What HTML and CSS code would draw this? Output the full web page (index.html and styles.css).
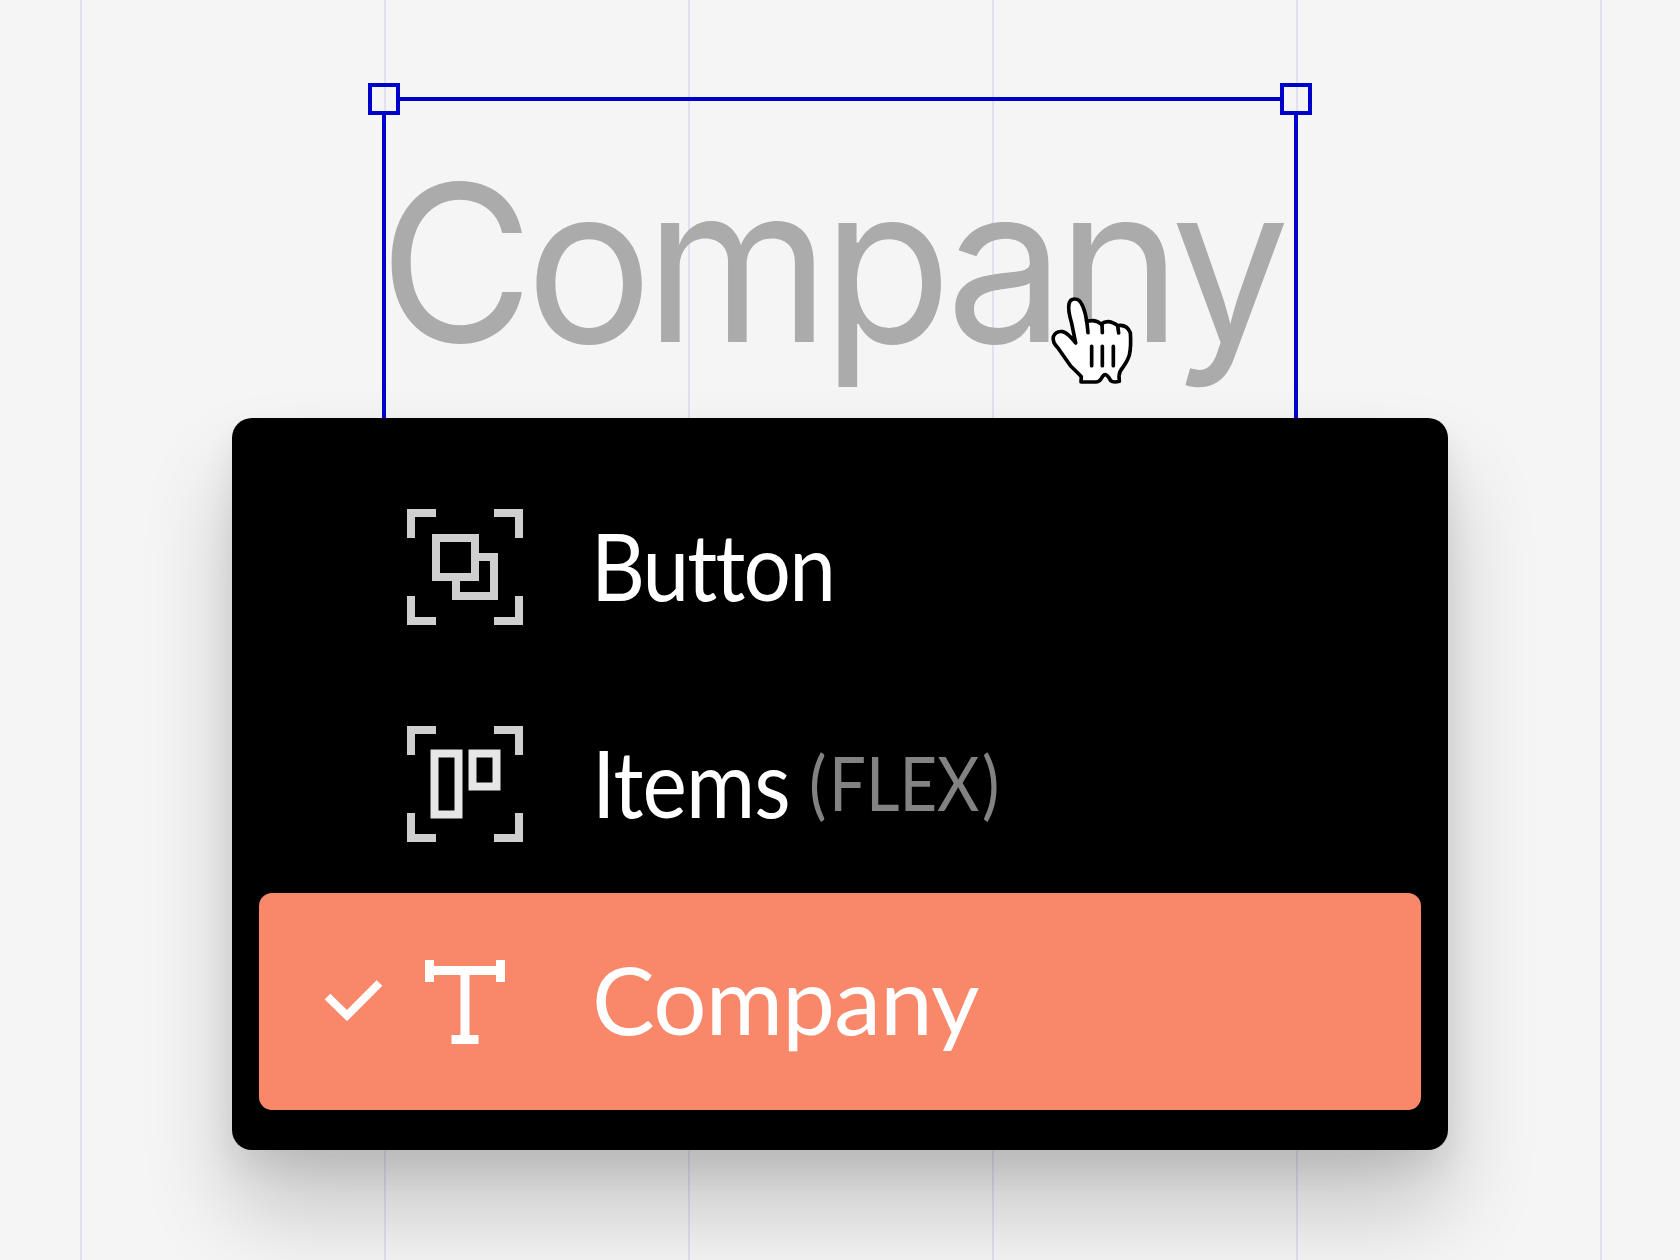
FILE: index.html
```html
<!DOCTYPE html>
<html lang="en">
    <head>
        <meta charset="utf-8">
        <title>Layers</title>
        <link rel="stylesheet" href="styles.css">
    </head>
    <body>
        <main class="canvas">
            <div class="selection">
                <span class="handle handle-left"></span>
                <span class="handle handle-right"></span>
                <div class="headline">Company</div>
            </div>
            <ul class="menu">
                <li class="row">
                    <span class="check"></span>
                    <svg class="icon" viewBox="0 0 116 116">
                        <path class="frame" d="M4 29V4H29M87 4H112V29M112 87V112H87M29 112H4V87"/>
                        <path class="group" d="M29 29H68V68H29ZM72 48H87V87H49V72"/>
                    </svg>
                    <span class="label label-button">Button</span>
                </li>
                <li class="row">
                    <span class="check"></span>
                    <svg class="icon" viewBox="0 0 116 116">
                        <path class="frame" d="M4 29V4H29M87 4H112V29M112 87V112H87M29 112H4V87"/>
                        <path class="flex" d="M27.5 27.5H51.5V88.5H27.5ZM65.5 27.5H89.5V60.5H65.5Z"/>
                    </svg>
                    <span class="label label-items">Items</span>
                    <span class="hint">(<span class="hint-text">FLEX</span>)</span>
                </li>
                <li class="row active">
                    <svg class="check" viewBox="0 0 60 44">
                        <path d="M2.5 19.5L22 38.5L54.5 6"/>
                    </svg>
                    <svg class="icon" viewBox="0 0 116 116">
                        <path class="type" d="M22.5 17V39M93.5 17V39M22.5 27.5H93.5M58 27.5V96.5M44.5 96.5H71.5"/>
                    </svg>
                    <span class="label label-company">Company</span>
                </li>
            </ul>
            <svg class="cursor" viewBox="0 0 360 360">
                <path class="hand" d="M137 189L125 130Q113 90 117 72Q120 57 134 57Q149 57 157 76Q166 95 170 125Q195 116 213 132Q236 115 263 137Q290 132 301 158Q304 200 298 225Q294 240 280 260Q268 273 267 288L268 304Q250 309 242 302Q232 284 226 284Q220 284 213 297Q206 307 196 306H153L154 290Q145 280 122 258L84 204Q66 186 70 170Q78 152 98 155Q113 158 137 189Z"/>
                <path class="crease" d="M170 120L174 158M216 132L217 158M263 137L266 159M185 199V257M217 199V257M250 199V257"/>
            </svg>
        </main>
    </body>
</html>
```
FILE: styles.css
```css
* {
  box-sizing: border-box;
}
body {
  margin: 0;
  background: #f5f5f5;
}
.canvas {
  position: relative;
  width: 1680px;
  height: 1260px;
  padding-top: 97px;
  overflow: hidden;
  background: repeating-linear-gradient(to right, #e0e0f1 0 2px, transparent 2px 304px) 80px 0 no-repeat;
}
.selection {
  position: relative;
  width: 916px;
  height: 321px;
  margin-left: 382px;
  border: 4px solid #0000cd;
  border-bottom: none;
}
.handle {
  position: absolute;
  top: -18px;
  width: 32px;
  height: 32px;
  border: 4px solid #0000cd;
  background: linear-gradient(to right, transparent 12px, #e0e0f1 12px 14px, transparent 14px) #f5f5f5;
}
.handle-left {
  left: -18px;
}
.handle-right {
  right: -18px;
}
.headline {
  margin-left: -7px;
  padding-top: 30px;
  font: 400 218px/264px Inter, "Liberation Sans", sans-serif;
  letter-spacing: -8px;
  color: #ababab;
  white-space: nowrap;
  transform: scaleX(0.97);
  transform-origin: left;
}
.menu {
  position: relative;
  width: 1216px;
  height: 732px;
  margin: 0 0 0 232px;
  padding: 41px 27px 40px;
  list-style: none;
  border-radius: 20px;
  background: #000;
  box-shadow: 0 16px 32px rgba(0, 0, 0, 0.07), 0 60px 90px rgba(0, 0, 0, 0.2);
}
.row {
  display: flex;
  align-items: center;
  height: 217px;
  padding: 0 0 5px 66px;
  border-radius: 13px;
}
.active {
  background: #f9876a;
}
.check {
  width: 60px;
  height: 44px;
  margin-right: 22px;
}
.icon {
  width: 116px;
  height: 116px;
  margin: 3px 69px 0 0;
}
.row path {
  fill: none;
  stroke: #cfcfcf;
  stroke-width: 8;
}
.row .flex {
  stroke: #e6e6e6;
}
.active path {
  stroke: #fff;
}
.active .type {
  stroke-width: 9;
}
.label {
  font: 400 94px/120px Lato, "Open Sans", sans-serif;
  color: #fff;
  transform-origin: left;
}
.label-button {
  margin-left: -1px;
  letter-spacing: -2px;
  transform: scaleX(0.89);
}
.label-items {
  letter-spacing: -1px;
  transform: scaleX(0.895);
}
.label-company {
  letter-spacing: -0.7px;
}
.hint {
  font: 400 75px/100px Lato, "Open Sans", sans-serif;
  color: #828282;
  margin-left: -4px;
  transform: scaleX(0.87);
  transform-origin: left;
}
.hint-text {
  margin: 0 3px;
}
.cursor {
  position: absolute;
  left: 1030px;
  top: 280px;
  width: 120px;
  height: 120px;
}
.hand {
  fill: #fff;
  stroke: #000;
  stroke-width: 11;
  stroke-linejoin: round;
}
.crease {
  fill: none;
  stroke: #000;
  stroke-width: 11;
  stroke-linecap: round;
}
```
